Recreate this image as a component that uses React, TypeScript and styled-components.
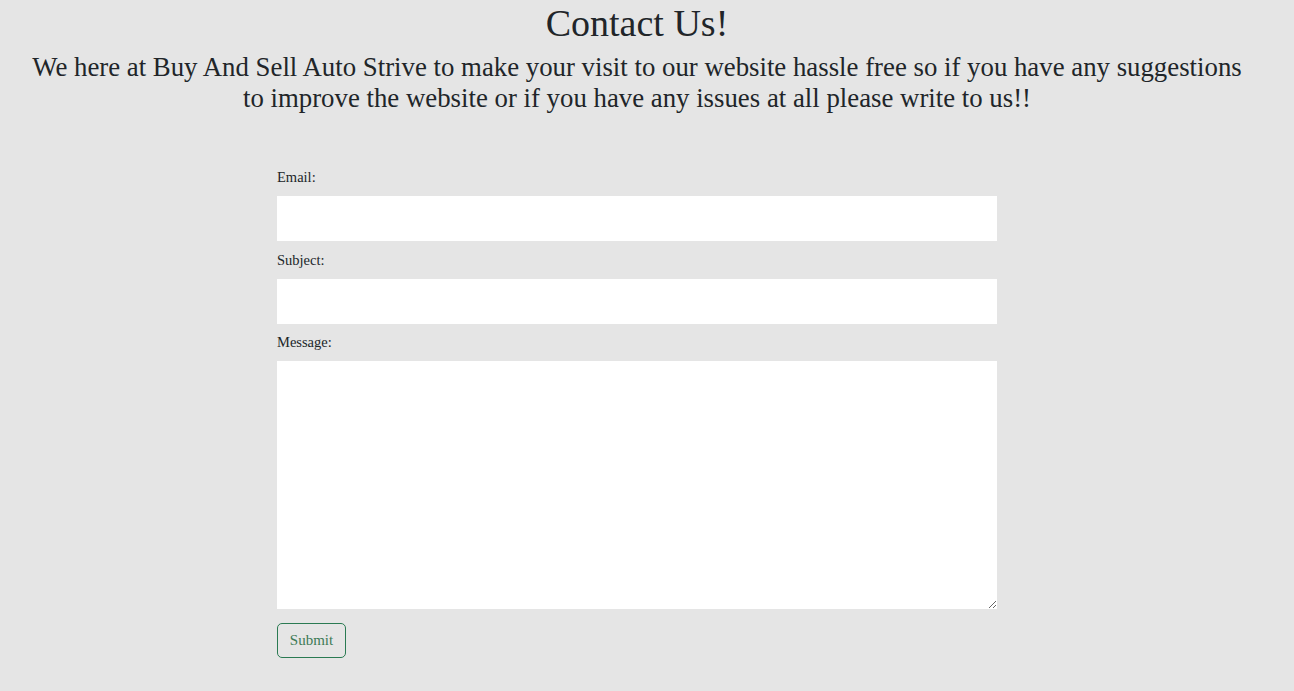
import React from "react";
import styled, { createGlobalStyle } from "styled-components";

const Global = createGlobalStyle`
  html, body { margin: 0; padding: 0; background: #e5e5e5; }
  body { font-family: "Liberation Serif", "DejaVu Serif", serif; color: #212529; }
  * { box-sizing: border-box; }
`;

const Page = styled.div`
  width: 1274px;
  min-height: 691px;
  padding-top: 2px;
`;

const Title = styled.h1`
  margin: 0;
  text-align: center;
  font-size: 38px;
  font-weight: 400;
  line-height: 42px;
`;

const Intro = styled.p`
  margin: 8px 0 0;
  text-align: center;
  font-size: 26.8px;
  line-height: 31px;
  padding: 0 10px;
  white-space: nowrap;
`;

const Form = styled.form`
  width: 720px;
  margin: 53px auto 0;
  display: flex;
  flex-direction: column;
  align-items: flex-start;
`;

const Label = styled.label`
  font-size: 14.5px;
  line-height: 21px;
  margin-bottom: 8px;
`;

const Input = styled.input`
  width: 100%;
  height: 45px;
  border: none;
  background: #fff;
  margin-bottom: 8.5px;
  outline: none;
`;

const TextArea = styled.textarea`
  width: 100%;
  height: 248px;
  border: none;
  background: #fff;
  margin: 0 0 14px;
  outline: none;
  display: block;
`;

const Button = styled.button`
  width: 69px;
  height: 35px;
  border: 1px solid #2a7a52;
  border-radius: 5px;
  background: transparent;
  color: #3d7a56;
  font-family: inherit;
  font-size: 15px;
  padding: 0;
`;

export default function App() {
  return (
    <>
      <Global />
      <Page>
        <Title>Contact Us!</Title>
        <Intro>
          We here at Buy And Sell Auto Strive to make your visit to our website hassle free so if you have any suggestions
          <br />
          to improve the website or if you have any issues at all please write to us!!
        </Intro>
        <Form onSubmit={(e) => e.preventDefault()}>
          <Label htmlFor="email">Email:</Label>
          <Input id="email" type="email" />
          <Label htmlFor="subject">Subject:</Label>
          <Input id="subject" type="text" />
          <Label htmlFor="message">Message:</Label>
          <TextArea id="message" />
          <Button type="submit">Submit</Button>
        </Form>
      </Page>
    </>
  );
}
